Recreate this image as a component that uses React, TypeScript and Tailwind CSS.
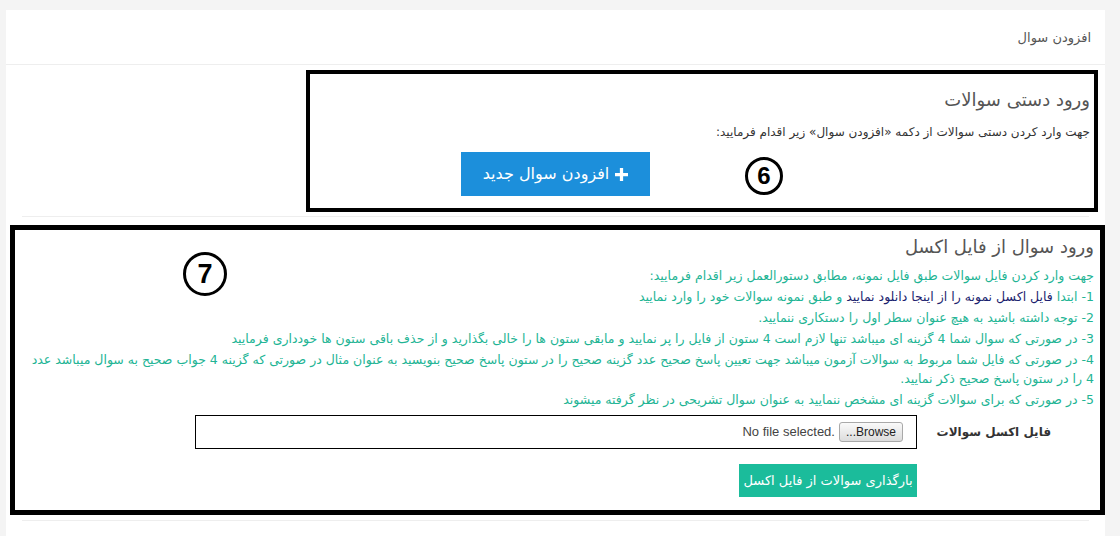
const font = { fontFamily: '"DejaVu Sans", "Noto Sans", sans-serif' };

const steps = [
  "2- توجه داشته باشید به هیچ عنوان سطر اول را دستکاری ننمایید.",
  "3- در صورتی که سوال شما 4 گزینه ای میباشد تنها لازم است 4 ستون از فایل را پر نمایید و مابقی ستون ها را خالی بگذارید و از حذف باقی ستون ها خودداری فرمایید",
  "4- در صورتی که فایل شما مربوط به سوالات آزمون میباشد جهت تعیین پاسخ صحیح عدد گزینه صحیح را در ستون پاسخ صحیح بنویسید به عنوان مثال در صورتی که گزینه 4 جواب صحیح به سوال میباشد عدد 4 را در ستون پاسخ صحیح ذکر نمایید.",
  "5- در صورتی که برای سوالات گزینه ای مشخص ننمایید به عنوان سوال تشریحی در نظر گرفته میشوند",
];

function Marker({ n, className }: { n: string; className: string }) {
  return (
    <div
      className={`absolute flex items-center justify-center rounded-full border-[3px] border-black bg-white font-bold text-black ${className}`}
      style={{ fontFamily: '"Liberation Sans", sans-serif' }}
    >
      {n}
    </div>
  );
}

export default function App() {
  return (
    <div className="h-[536px] overflow-hidden bg-[#f4f4f4] pl-[6px] pr-[15px] pt-[10px]" style={font}>
      <div dir="rtl" className="h-full bg-white">
        <div className="flex h-[55px] items-center border-b border-[#eeeeee] px-[14px] pt-[2px] text-[13px] text-[#555]">
          افزودن سوال
        </div>

        <div className="pt-[5px]">
          <div className="relative mr-[7px] h-[142px] w-[792px] border-4 border-black px-[4px] pt-[14px]">
            <h2 className="text-[18px] leading-[24px] text-[#555]">ورود دستی سوالات</h2>
            <p className="mt-[10px] text-[12px] leading-[20px] text-[#333]">
              جهت وارد کردن دستی سوالات از دکمه «افزودن سوال» زیر اقدام فرمایید:
            </p>
            <button className="mr-[440px] mt-[10px] flex h-[44px] w-[189px] items-center justify-center gap-[6px] bg-[#1c8fdb] text-[16px] text-white">
              <svg width="13" height="13" viewBox="0 0 12 12" fill="white">
                <path d="M4.5 0h3v4.5H12v3H7.5V12h-3V7.5H0v-3h4.5z" />
              </svg>
              افزودن سوال جدید
            </button>
            <Marker n="6" className="left-[435px] top-[83px] h-[38px] w-[38px] text-[24px]" />
          </div>
        </div>

        <div className="mx-[16px] mt-[4px] border-t border-[#eeeeee]" />

        <div className="relative ml-[4px] mt-[8px] h-[290px] border-[5px] border-black px-[6px] pt-[4px]">
          <h2 className="text-[18px] leading-[26px] text-[#555]">ورود سوال از فایل اکسل</h2>
          <div className="mt-[6px] text-[12.5px] leading-[19px] text-[#22b494]">
            <div className="mb-[2px]">جهت وارد کردن فایل سوالات طبق فایل نمونه، مطابق دستورالعمل زیر اقدام فرمایید:</div>
            <div className="mb-[2px]">
              1- ابتدا <span className="text-[#1d1f6f]">فایل اکسل نمونه را از اینجا دانلود نمایید</span> و طبق نمونه سوالات خود را وارد نمایید
            </div>
            {steps.map((s) => (
              <div key={s} className="mb-[2px]">
                {s}
              </div>
            ))}
          </div>

          <div className="mt-[6px] flex items-center">
            <label className="w-[177px] pr-[43px] text-[12px] font-bold text-[#333]">فایل اکسل سوالات</label>
            <div className="flex h-[34px] w-[722px] items-center gap-[4px] border border-black px-[13px]">
              <span className="rounded-[3px] border border-[#a9a9a9] bg-gradient-to-b from-[#fafafa] to-[#dcdcdc] px-[6px] text-[12px] leading-[18px] text-[#222]" style={{ fontFamily: '"Liberation Sans", sans-serif' }}>
                Browse...
              </span>
              <span dir="ltr" className="text-[13px] text-[#444]" style={{ fontFamily: '"Liberation Sans", sans-serif' }}>
                No file selected.
              </span>
            </div>
          </div>
          <div className="mr-[177px] mt-[15px]">
            <button className="h-[33px] w-[178px] bg-[#1bbc9b] text-[13px] text-white">بارگذاری سوالات از فایل اکسل</button>
          </div>

          <Marker n="7" className="left-[168px] top-[22px] h-[44px] w-[44px] text-[27px]" />
        </div>

        <div className="mx-[16px] mt-[5px] border-t border-[#eeeeee]" />
      </div>
    </div>
  );
}
